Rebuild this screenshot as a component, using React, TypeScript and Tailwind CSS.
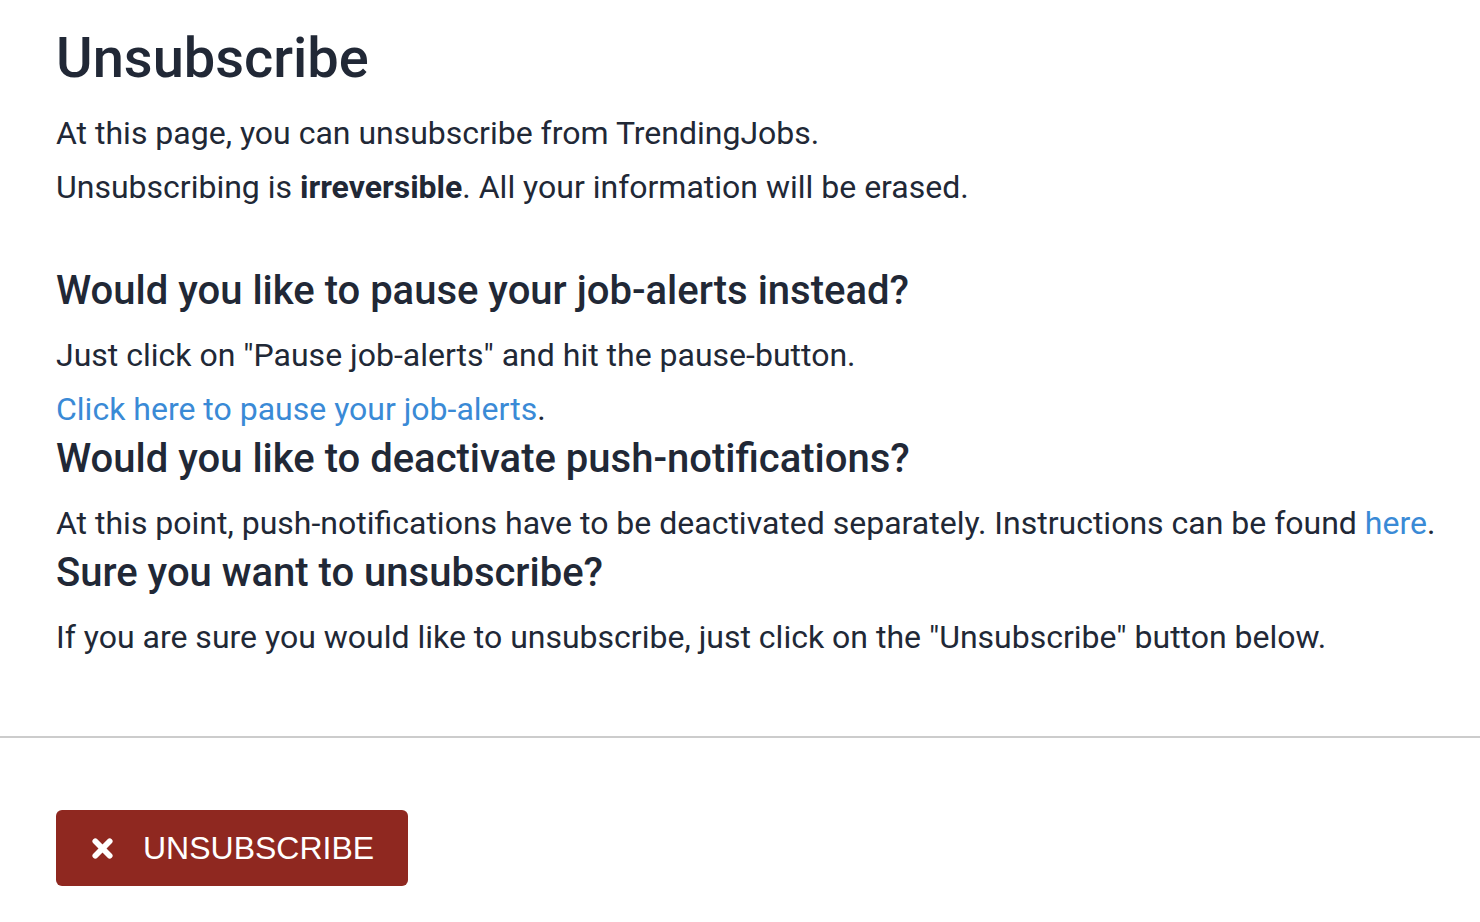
import React from 'react';

function TimesIcon(props: React.SVGProps<SVGSVGElement>) {
  return (
    <svg {...props} viewBox="0 0 24 24" xmlns="http://www.w3.org/2000/svg" fill="none" stroke="currentColor" strokeWidth="6" strokeLinecap="round">
      <line x1="4.5" y1="4.5" x2="19.5" y2="19.5" />
      <line x1="19.5" y1="4.5" x2="4.5" y2="19.5" />
    </svg>
  );
}

export default function App() {
  return (
    <div className="min-h-screen bg-white text-[#212836]" style={{ fontFamily: 'Roboto, "Liberation Sans", sans-serif' }}>
      <div className="pl-[56px] pr-6 pt-[28px]">
        <h1 className="text-[56px] leading-[60px] font-medium mb-[18px]">Unsubscribe</h1>
        <p className="text-[32px] leading-[54px]">At this page, you can unsubscribe from TrendingJobs.</p>
        <p className="text-[32px] leading-[54px]">
          Unsubscribing is <strong className="font-bold">irreversible</strong>. All your information will be erased.
        </p>

        <h3 className="text-[40px] leading-[44px] font-medium mt-[55px] mb-[15px]">Would you like to pause your job-alerts instead?</h3>
        <p className="text-[32px] leading-[54px]">Just click on "Pause job-alerts" and hit the pause-button.</p>
        <p className="text-[32px] leading-[54px]">
          <a href="#" className="text-[#3a8ad6]">Click here to pause your job-alerts</a>.
        </p>

        <h3 className="text-[40px] leading-[44px] font-medium mt-px mb-[15px]">Would you like to deactivate push-notifications?</h3>
        <p className="text-[32px] leading-[54px]">
          At this point, push-notifications have to be deactivated separately. Instructions can be found{' '}
          <a href="#" className="text-[#3a8ad6]">here</a>.
        </p>

        <h3 className="text-[40px] leading-[44px] font-medium mt-px mb-[15px]">Sure you want to unsubscribe?</h3>
        <p className="text-[32px] leading-[54px]">
          If you are sure you would like to unsubscribe, just click on the "Unsubscribe" button below.
        </p>
      </div>

      <hr className="mt-[72px] border-0 h-[2px] bg-[#cccccc]" />

      <div className="pl-[56px] pt-[72px]">
        <button
          className="flex items-center h-[76px] w-[352px] rounded-md bg-[#8f2820] text-white pl-[35px]"
          style={{ fontFamily: '"Liberation Sans", Arial, sans-serif' }}
        >
          <TimesIcon className="w-[23px] h-[23px] mr-[29px]" />
          <span className="text-[32px] leading-none">UNSUBSCRIBE</span>
        </button>
      </div>
    </div>
  );
}
